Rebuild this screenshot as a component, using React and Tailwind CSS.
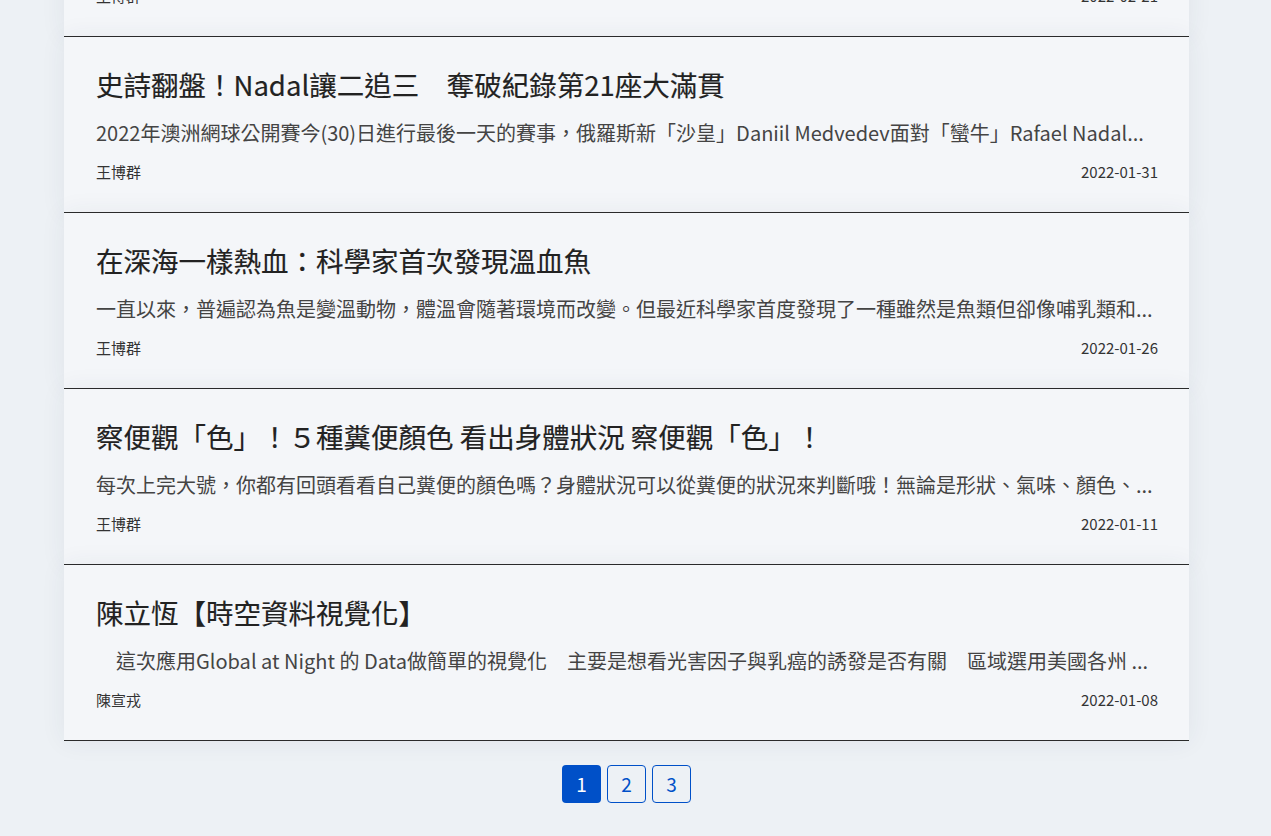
import React from "react";

const posts = [
  {
    title: "「新冠肺炎」疫情下的生活改變與數據觀察",
    desc: "疫情爆發至今已經過了兩年，我們的生活發生了許多變化，這篇文章透過數據來看看大家的生活有什麼樣的改變...",
    author: "王博群",
    date: "2022-02-21",
  },
  {
    title: "史詩翻盤！Nadal讓二追三　奪破紀錄第21座大滿貫",
    desc: "2022年澳洲網球公開賽今(30)日進行最後一天的賽事，俄羅斯新「沙皇」Daniil Medvedev面對「蠻牛」Rafael Nadal...",
    author: "王博群",
    date: "2022-01-31",
  },
  {
    title: "在深海一樣熱血：科學家首次發現溫血魚",
    desc: "一直以來，普遍認為魚是變溫動物，體溫會隨著環境而改變。但最近科學家首度發現了一種雖然是魚類但卻像哺乳類和...",
    author: "王博群",
    date: "2022-01-26",
  },
  {
    title: "察便觀「色」！５種糞便顏色 看出身體狀況 察便觀「色」！",
    desc: "每次上完大號，你都有回頭看看自己糞便的顏色嗎？身體狀況可以從糞便的狀況來判斷哦！無論是形狀、氣味、顏色、...",
    author: "王博群",
    date: "2022-01-11",
  },
  {
    title: "陳立恆【時空資料視覺化】",
    desc: "　這次應用Global at Night 的 Data做簡單的視覺化　主要是想看光害因子與乳癌的誘發是否有關　區域選用美國各州 ...",
    author: "陳宣戎",
    date: "2022-01-08",
  },
];

const font = {
  fontFamily: '"Noto Sans CJK TC", "Noto Sans", sans-serif',
};

function Card({ p }) {
  return (
    <div className="relative bg-[#f4f6f9] border-b border-[#2b2b2b] pl-8 pr-[31px] pt-[26px] pb-[29px] shadow-[0_0_24px_rgba(40,60,90,0.07)]">
      <h2 className="text-[27.5px] leading-[42px] font-normal text-[#222] whitespace-nowrap overflow-hidden [-webkit-text-stroke:0.15px_#222]">
        {p.title}
      </h2>
      <p className="mt-[13px] text-[20px] leading-[30px] text-[#444] whitespace-nowrap overflow-hidden">
        {p.desc}
      </p>
      <div className="mt-[13px] flex justify-between text-[15px] leading-[22px] text-[#333]">
        <span>{p.author}</span>
        <span>{p.date}</span>
      </div>
    </div>
  );
}

export default function App() {
  return (
    <div className="min-h-[836px] bg-[#edf1f5] overflow-hidden" style={font}>
      <div className="ml-[64px] w-[1125px] -mt-[139px]">
        <div className="flex flex-col">
          {posts.map((p, i) => (
            <Card key={i} p={p} />
          ))}
        </div>
        <div className="mt-[24px] flex justify-center gap-[6px] pb-8">
          <button className="w-[39px] h-[38px] rounded-[4px] bg-[#0050c8] text-white text-[19px] flex items-center justify-center">
            1
          </button>
          <button className="w-[39px] h-[38px] rounded-[4px] border border-[#0050c8] text-[#0050c8] text-[19px] flex items-center justify-center">
            2
          </button>
          <button className="w-[39px] h-[38px] rounded-[4px] border border-[#0050c8] text-[#0050c8] text-[19px] flex items-center justify-center">
            3
          </button>
        </div>
      </div>
    </div>
  );
}
